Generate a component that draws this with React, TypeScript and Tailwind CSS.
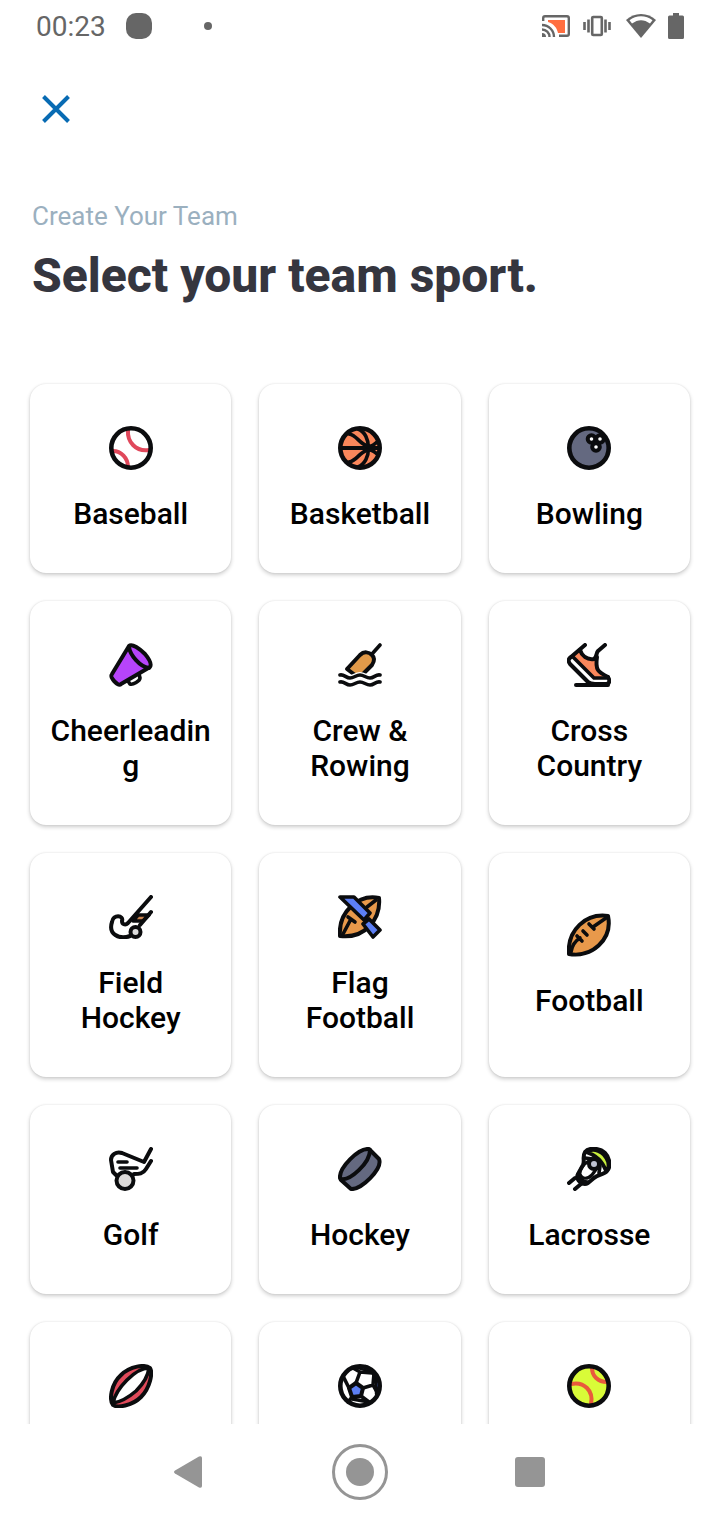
import type { ReactNode } from "react";

interface Sport {
  name: string;
  icon: ReactNode;
}

const INK = "#0b0c0e";

function SportIcon({ children }: { children: ReactNode }) {
  return (
    <svg
      viewBox="0 0 44 44"
      className="size-11 shrink-0"
      fill="none"
      stroke={INK}
      strokeWidth="4"
      strokeLinecap="round"
      strokeLinejoin="round"
      aria-hidden="true"
    >
      {children}
    </svg>
  );
}

const sports: Sport[] = [
  {
    name: "Baseball",
    icon: (
      <>
        <circle cx="22" cy="22" r="20" fill="#fff" stroke="none" />
        <path d="M19 4C18 16 27 26 40 24M4 25C12 25 19 32 19 41" stroke="#e0485b" />
        <circle cx="22" cy="22" r="19.7" strokeWidth="4.600" />
      </>
    ),
  },
  {
    name: "Basketball",
    icon: (
      <>
        <circle cx="22" cy="22" r="19.7" fill="#fa875b" stroke="none" />
        <path d="M3 22H41" />
        <path d="M20 3C34 8 34 36 20 41" strokeWidth="3.6" />
        <path d="M11 8C19 9 21 18 30 20C34 21 37 18 39 16" strokeWidth="3.6" />
        <path d="M11 36C19 35 21 26 30 24C34 23 37 26 39 28" strokeWidth="3.6" />
        <circle cx="22" cy="22" r="19.7" strokeWidth="4.600" />
      </>
    ),
  },
  {
    name: "Bowling",
    icon: (
      <>
        <circle cx="22" cy="22" r="19.7" fill="#646980" strokeWidth="4.600" />
        <g fill="#fff" strokeWidth="4">
          <circle cx="24.5" cy="13" r="3.8" />
          <circle cx="33" cy="13" r="3.8" />
          <circle cx="29" cy="21" r="3.8" />
        </g>
      </>
    ),
  },
  {
    name: "Cheerleading",
    icon: (
      <>
        <path d="M19 38L21 41C24 42 31 38 31 35L30 31" fill="#fff" strokeWidth="3.6" />
        <path
          d="M20 3C23 0 31 6 36 11C41 17 43 21 41 24L12 41C10 43 7 40 5 38C3 35 1 34 3 31Z"
          fill="#b744fb"
        />
        <path d="M20 4C21 12 31 24 40 25" />
      </>
    ),
  },
  {
    name: "Crew & Rowing",
    icon: (
      <>
        <path d="M42 2L34 11" strokeWidth="3.6" />
        <path d="M17 32L9 26L22 12C26 8 31 9 34 12C37 15 36 19 34 22L24 32Z" fill="#e29a49" />
        <path
          d="M2 32C6 31 8 35 12 35C16 35 18 32 22 32C26 32 28 35 32 35C36 35 38 31 42 32"
          stroke="#fff"
          strokeWidth="6"
        />
        <path
          d="M2 32C6 31 8 35 12 35C16 35 18 32 22 32C26 32 28 35 32 35C36 35 38 31 42 32M2 39C6 38 8 42 12 42C16 42 18 39 22 39C26 39 28 42 32 42C36 42 38 38 42 39"
          strokeWidth="3.6"
        />
      </>
    ),
  },
  {
    name: "Cross Country",
    icon: (
      <>
        <path d="M11 8C15 8 16 16 29 15C29 27 30 28 38 32L41 36H28L5 14Z" fill="#fa875b" stroke="none" />
        <path d="M18 2L4 14C1 16 1 18 3 21L21 39C23 41 25 41 28 41H39C43 41 43 37 41 34" />
        <path d="M6 14L27 35H40" strokeWidth="3.6" />
        <path d="M13 7C15 13 20 17 27 16C30 14 29 10 31 8L38 2" />
        <path d="M30 14C28 27 31 29 41 34" />
        <path d="M9 42H41" />
      </>
    ),
  },
  {
    name: "Field Hockey",
    icon: (
      <>
        <path d="M29 20H40L34 26H24Z" fill="#c9834f" strokeWidth="3.6" />
        <path d="M42 2L19 28C16 31 13 29 13 26C15 20 4 19 3 27C-1 39 10 45 21 41" />
        <path d="M42 17L31 30" />
        <circle cx="26.5" cy="37" r="5" fill="#dcdcdc" />
      </>
    ),
  },
  {
    name: "Flag Football",
    icon: (
      <>
        <path d="M41 3C20 -1 0 17 2 41C27 44 43 24 41 3Z" fill="#e8994b" />
        <path d="M5 39L13 24M10 22L17 27M29 12L38 5" strokeWidth="3.6" />
        <path d="M2 2H16L32 18L26 25Z" fill="#5c7ff5" strokeWidth="3.6" />
        <path d="M25 29L31 24L42 35L35 42Z" fill="#5c7ff5" strokeWidth="3.6" />
      </>
    ),
  },
  {
    name: "Football",
    icon: (
      <>
        <path d="M41 3C19 0 0 17 2 41C24 45 46 27 41 3Z" fill="#e8994b" />
        <path d="M4 39C5 33 8 28 13 25M26 14L39 5M10 23L15 28M16 18L20 22M22 11L27 16" strokeWidth="3.6" />
      </>
    ),
  },
  {
    name: "Golf",
    icon: (
      <>
        <path d="M42 2L35 15L13 6C7 4 2 8 2 13L4 25L7 28M42 14L37 22C34 27 30 27 25 27" />
        <path d="M9 15H18M11 21H28" strokeWidth="3.6" />
        <circle cx="16" cy="33.5" r="8.5" fill="#dcdad9" />
      </>
    ),
  },
  {
    name: "Hockey",
    icon: (
      <>
        <path d="M2 31C1 21 20 1 31 2L41 12C45 22 23 43 13 42L3 33Z" fill="#646980" />
        <path d="M3 32C12 34 32 16 32 3" />
      </>
    ),
  },
  {
    name: "Lacrosse",
    icon: (
      <>
        <path
          d="M18 5C22 0 33 1 38 6C43 11 44 20 40 24C37 28 31 27 27 31L21 36C16 39 8 33 11 27L16 18C18 14 15 10 18 5Z"
          fill="#fff"
        />
        <path d="M19 5C26 1 37 3 41 15C42 20 41 23 39 24C36 15 29 8 19 5Z" fill="#c8ee3c" strokeWidth="3.6" />
        <path d="M11 27C12 31 15 34 21 35C17 38 9 34 11 27Z" fill="#c8ee3c" strokeWidth="3" />
        <path d="M18 11L26 12M33 19L32 26" strokeWidth="3.6" />
        <path d="M22 14C16 17 12 23 13 27C15 33 21 32 25 28L30 21" strokeWidth="3.2" />
        <circle cx="27" cy="17" r="5" fill="#bfc3d3" />
        <path d="M8 31L2 36M14 37L8 42" />
      </>
    ),
  },
  {
    name: "Rugby",
    icon: (
      <>
        <path
          d="M4 41C0 36 2 20 12 11C21 2 36 0 41 4C44 9 41 24 32 33C23 42 8 44 4 41Z"
          fill="#e04a5a"
        />
        <path d="M4 39C6 29 12 22 18 16C25 9 33 4 40 4C39 13 33 21 27 27C20 33 12 38 4 39Z" fill="#fff" strokeWidth="3.6" />
      </>
    ),
  },
  {
    name: "Soccer",
    icon: (
      <>
        <circle cx="22" cy="22" r="19.7" fill="#fff" stroke="none" />
        <path d="M20 4L34 8L38 17L38 30L42 20L36 7L28 2Z" fill="#5c7ff5" strokeWidth="2.400" />
        <path d="M18 19L25 24L23 32L14 33L11 24Z" fill="#5c7ff5" />
        <path
          d="M18 19L22 8L15 4M22 8L34 9M25 24L35 21L36 10M35 21L40 30M23 32L31 38M14 33L10 38M11 24L6 14M31 38L14 35"
          strokeWidth="3.6"
        />
        <circle cx="22" cy="22" r="19.7" strokeWidth="4.600" />
      </>
    ),
  },
  {
    name: "Softball",
    icon: (
      <>
        <circle cx="22" cy="22" r="20" fill="#d9fb38" stroke="none" />
        <path d="M25 4C25 12 31 18 40 18M4 20C17 17 27 27 24 40" stroke="#e95a3c" />
        <circle cx="22" cy="22" r="19.7" strokeWidth="4.600" />
      </>
    ),
  },
];

function StatusBar() {
  return (
    <div className="flex h-[52px] shrink-0 items-center justify-between px-9 text-[#666]">
      <div className="flex items-center">
        <span className="pt-0.5 text-[28px] leading-8">00:23</span>
        <span className="ml-5 size-[26px] rounded-[10px] bg-[#666]" />
        <span className="ml-[52px] size-2 rounded-full bg-[#666]" />
      </div>
      <div className="flex items-center">
        <svg viewBox="0 0 28 24" className="h-6 w-7" fill="none" stroke="currentColor" strokeWidth="2.4" aria-hidden="true">
          <path d="M6 6H23V19H16C15 14 12 10 6 8Z" fill="#ff6e40" stroke="none" />
          <path d="M1.2 7V4Q1.2 2.2 3 2.2H25Q26.8 2.2 26.8 4V20Q26.8 21.8 25 21.8H17M0 11A12 12 0 0 1 12 23M0 15.500A7.500 7.500 0 0 1 7.500 23" />
          <path d="M0 19A4 4 0 0 1 4 23H0Z" fill="currentColor" stroke="none" />
        </svg>
        <svg viewBox="0 0 28 24" className="ml-[13px] h-6 w-7" fill="none" stroke="currentColor" strokeWidth="2.6" aria-hidden="true">
          <rect x="9.2" y="3" width="9.6" height="18" rx="1" />
          <path d="M5.5 5.5V18.5M1.5 8V16M22.5 5.5V18.5M26.5 8V16" />
        </svg>
        <svg viewBox="0 0 30 26" className="ml-[15px] h-[26px] w-[30px]" aria-hidden="true">
          <path d="M15 25L0 7C8-1 22-1 30 7Z" fill="currentColor" />
          <path d="M3.5 7.3C10 2 20 2 26.5 7.3L24 10.5C18 6 12 6 6 10.500Z" fill="#fff" />
        </svg>
        <svg viewBox="0 0 16 26" className="ml-3 h-[26px] w-4" aria-hidden="true">
          <path d="M5 0H11V2.5H14.5Q16 2.5 16 4V24.5Q16 26 14.5 26H1.5Q0 26 0 24.5V4Q0 2.5 1.5 2.5H5Z" fill="currentColor" />
        </svg>
      </div>
    </div>
  );
}

function SportCard({ name, icon }: Sport) {
  return (
    <button
      type="button"
      className="flex min-w-0 flex-col items-center justify-center gap-[26px] rounded-2xl bg-white px-4 py-[42px] shadow-[0_2px_4px_rgba(0,0,0,0.2),0_0_2px_rgba(0,0,0,0.1)]"
    >
      <SportIcon>{icon}</SportIcon>
      <span className="w-full text-center text-[30px] leading-[35px] font-medium break-words text-black">{name}</span>
    </button>
  );
}

function NavBar() {
  return (
    <nav className="flex h-24 shrink-0 items-center justify-center gap-[114px] bg-white text-[#959595]">
      <button type="button" aria-label="Back" className="flex size-14 items-center justify-center pr-1">
        <svg viewBox="0 0 28 32" className="h-8 w-7" fill="currentColor" aria-hidden="true">
          <path d="M1 14.5L25 .5Q28 -.5 28 2V30Q28 32.5 25 31.5L1 17.5Q-1 16 1 14.5Z" />
        </svg>
      </button>
      <button
        type="button"
        aria-label="Home"
        className="flex size-14 items-center justify-center rounded-full border-3 border-[#959595]"
      >
        <span className="size-7 rounded-full bg-[#959595]" />
      </button>
      <button type="button" aria-label="Recent apps" className="flex size-14 items-center justify-center">
        <span className="size-[30px] rounded-[3px] bg-[#959595]" />
      </button>
    </nav>
  );
}

export default function App() {
  return (
    <div className="flex h-screen flex-col bg-white font-[Roboto,sans-serif]">
      <StatusBar />
      <main className="min-h-0 flex-1 overflow-y-auto [scrollbar-width:none]">
        <header className="px-8 pt-[33px]">
          <button type="button" aria-label="Close" className="flex size-12 items-center justify-center text-[#086bb3]">
            <svg viewBox="0 0 28 28" className="size-7" fill="none" stroke="currentColor" strokeWidth="4" aria-hidden="true">
              <path d="M1.5 1.5L26.5 26.5M26.5 1.5L1.5 26.5" />
            </svg>
          </button>
          <p className="mt-[67px] text-[26px] leading-8 text-[#9bb0bf]">Create Your Team</p>
          <h1 className="mt-4 text-[48px] leading-14 font-extrabold text-[#35363f]">Select your team sport.</h1>
        </header>
        <section aria-label="Sports" className="grid grid-cols-3 gap-7 px-[30px] pt-20 pb-7">
          {sports.map((sport) => (
            <SportCard key={sport.name} {...sport} />
          ))}
        </section>
      </main>
      <NavBar />
    </div>
  );
}
